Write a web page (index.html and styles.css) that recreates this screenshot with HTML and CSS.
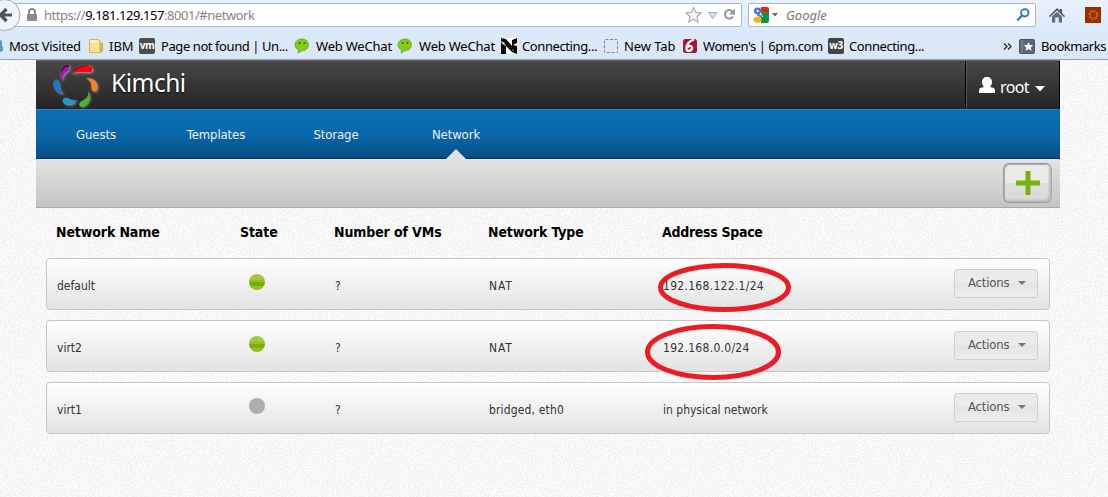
FILE: index.html
```html
<!DOCTYPE html>
<html lang="en">
<head>
<meta charset="utf-8">
<title>Kimchi</title>
<link rel="stylesheet" href="styles.css">
</head>
<body>
<svg class="grain" width="1108" height="437" aria-hidden="true">
  <filter id="noise" x="0" y="0" width="100%" height="100%" color-interpolation-filters="sRGB">
    <feTurbulence type="fractalNoise" baseFrequency="0.6" numOctaves="3" seed="4"/>
    <feColorMatrix values="0.13 0 0 0 0.906  0.13 0 0 0 0.906  0.13 0 0 0 0.906  0 0 0 0 1"/>
  </filter>
  <rect width="1108" height="437" filter="url(#noise)"/>
</svg>
<div class="browser">
  <div class="address-row">
    <div class="url-bar">
      <svg class="lock" width="12" height="14" viewBox="0 0 12 14"><path d="M3 6V4a3 3 0 0 1 6 0v2" fill="none" stroke="#8b8b8b" stroke-width="2"/><rect x="1" y="6" width="10" height="7" rx="1" fill="#8b8b8b"/></svg>
      <span class="url">https://<b>9.181.129.157</b>:8001/#network</span>
      <svg class="url-tools" width="54" height="18" viewBox="0 0 54 18">
        <path d="M8.500 1.500l2.200 4.800 5.300.6-3.900 3.600 1.100 5.500-4.700-2.700-4.700 2.700 1.100-5.500L1 6.900l5.300-.6z" fill="#f2f2f2" stroke="#a5a5a5" stroke-width="1.100"/>
        <path d="M23.500 6.500h8.500l-4.250 6z" fill="#d5e1ef" stroke="#a0aab8"/>
        <path d="M47.500 5.500a4.300 4.300 0 1 0 .5 5" fill="none" stroke="#8d98a5" stroke-width="2"/><path d="M50 2.500v6h-6z" fill="#8d98a5"/>
      </svg>
    </div>
    <div class="search-bar">
      <svg width="16" height="16" viewBox="0 0 16 16"><path d="M8 0h6a2 2 0 0 1 2 2v3H8z" fill="#e2231a"/><path d="M8 5h8v9a2 2 0 0 1-2 2H8z" fill="#159247"/><path d="M0 0h7v16H0z" fill="#fff"/><ellipse cx="4.600" cy="4" rx="3.600" ry="3.400" fill="#3b78dc"/><ellipse cx="4.600" cy="4" rx="1.100" ry="1.300" fill="#fff"/><path d="M5 7c3 .5 4 2 3 3.500L4 8.500z" fill="#3b78dc"/><ellipse cx="4.600" cy="12.800" rx="4.200" ry="3" fill="#f3b517"/><path d="M8 5.500c-1.500 1 1.500 2 1.500 4.500" fill="none" stroke="#fff" stroke-width="1"/></svg>
      <svg class="engine-caret" width="6" height="4" viewBox="0 0 6 4"><path d="M0 0h6L3 3.500z" fill="#666"/></svg>
      <span class="placeholder">Google</span>
      <svg class="magnifier" width="14" height="14" viewBox="0 0 14 14"><circle cx="8.800" cy="4.800" r="3.700" fill="none" stroke="#2e75b6" stroke-width="1.900"/><path d="M6 7.600L1.200 12.500" stroke="#2e75b6" stroke-width="2.200"/></svg>
    </div>
    <svg class="home" width="16" height="15" viewBox="0 0 16 15"><path d="M8 0l2.500 2.500V1H13v4l3 3-1 1.200L8 2.500 1 9.200 0 8z" fill="#55606e"/><path d="M3 8.500l5-4.700 5 4.700V14.500H9.800V9.500H6.200v5H3z" fill="#636e7b"/></svg>
    <svg class="addon" width="16" height="16" viewBox="0 0 16 16"><rect width="16" height="16" fill="#9b2d00"/><circle cx="8.500" cy="8" r="3.600" fill="none" stroke="#c8750a" stroke-width="1"/><circle cx="8.500" cy="8" r="4.600" fill="none" stroke="#c8750a" stroke-width="1.300" stroke-dasharray="1.400 2.200"/></svg>
  </div>
  <svg class="back" width="21" height="34" viewBox="0 0 21 34"><circle cx="4.500" cy="15" r="15.500" fill="#eff5fc" stroke="#9aaabd"/><path d="M12 15H2M6.500 9L.5 15l6 6" fill="none" stroke="#445365" stroke-width="3.200"/></svg>
  <div class="bookmarks">
    <svg class="cut-icon" width="3" height="14" viewBox="0 0 3 14"><path d="M0 1l2 1v5l1 1v4l-3 1z" fill="#4e9dcd"/></svg>
    <span class="bm visited">Most Visited</span>
    <svg width="16" height="16" viewBox="0 0 16 16"><path d="M11 5h3.500v8L12 14.500z" fill="#ddb445" stroke="#c99a31" stroke-width=".7"/><path d="M1.500 1.500h9L12 3v11.500H1.500z" fill="#f9e391" stroke="#d1a83b" stroke-width=".8"/><path d="M2.500 2.500h7v2h-7z" fill="#fff7cf"/></svg>
    <span class="bm ibm">IBM</span>
    <svg width="16" height="16" viewBox="0 0 16 16"><rect width="16" height="16" rx="2" fill="#4b4b50"/><text x="8" y="11" class="vm-mark">vm</text></svg>
    <span class="bm page">Page not found | Un...</span>
    <svg width="16" height="16" viewBox="0 0 16 16"><path d="M8 1c4 0 6.500 2.500 6.500 5.700S12 12.500 8.500 12.600L4 15l.7-3C2.500 11 1 9 1 6.700 1 3.500 4 1 8 1z" fill="#86cc16" stroke="#4c9221" stroke-width=".6"/><circle cx="5.500" cy="5" r="1" fill="#355f16"/><circle cx="10.500" cy="5" r="1" fill="#355f16"/></svg>
    <span class="bm wechat">Web WeChat</span>
    <svg width="16" height="16" viewBox="0 0 16 16"><path d="M8 1c4 0 6.500 2.500 6.500 5.700S12 12.500 8.500 12.600L4 15l.7-3C2.500 11 1 9 1 6.700 1 3.500 4 1 8 1z" fill="#86cc16" stroke="#4c9221" stroke-width=".6"/><circle cx="5.500" cy="5" r="1" fill="#355f16"/><circle cx="10.500" cy="5" r="1" fill="#355f16"/></svg>
    <span class="bm wechat second">Web WeChat</span>
    <svg width="16" height="16" viewBox="0 0 16 16"><rect width="16" height="16" fill="#fff"/><path d="M0 0l5 1 6 7V2l5-2v16l-5-2-6-6v8H0z" fill="#050505"/><path d="M0 3l4 2-2 2zM16 5l-4 2 4 1z" fill="#fff"/><circle cx="4" cy="7" r="1" fill="#d8a31d"/><circle cx="12" cy="12" r=".8" fill="#d8a31d"/></svg>
    <span class="bm connect">Connecting...</span>
    <svg width="16" height="16" viewBox="0 0 16 16"><rect x="1.500" y="1.500" width="13" height="13" rx="1" fill="none" stroke="#7a8693" stroke-dasharray="3 1.500"/></svg>
    <span class="bm newtab">New Tab</span>
    <svg width="16" height="16" viewBox="0 0 16 16"><rect x="1" y="1" width="14" height="14" rx="2.500" fill="#a8172d"/><path d="M12 1.500C7 3 4 7 4.500 11c.3 2.500 5 2.500 5.500-.7.300-2.600-2.500-3.200-4.500-1" fill="none" stroke="#fff" stroke-width="2.300"/></svg>
    <span class="bm women">Women's | 6pm.com</span>
    <svg width="16" height="16" viewBox="0 0 16 16"><rect width="16" height="16" rx="2" fill="#444"/><text x="8" y="11" class="w3-mark">w3</text></svg>
    <span class="bm last">Connecting...</span>
    <svg class="more" width="9" height="7" viewBox="0 0 9 7"><path d="M1 .5l3 3-3 3M5 .5l3 3-3 3" fill="none" stroke="#222" stroke-width="1.200"/></svg>
    <svg class="marks-icon" width="16" height="15" viewBox="0 0 16 15"><rect x=".5" y=".5" width="15" height="14" rx="1" fill="#596778" stroke="#465362"/><path d="M3 1v13" stroke="#8a97a6"/><path d="M9.500 3l1.400 3 3.300.3-2.500 2.200.8 3.300-3-1.800-3 1.800.8-3.300L4.800 6.300 8.100 6z" fill="#fff"/></svg>
    <span class="bm marks">Bookmarks</span>
  </div>
</div>
<main class="app">
  <header class="topbar">
    <svg class="logo" width="52" height="49" viewBox="0 0 52 49">
      <defs><filter id="glow" x="-30%" y="-30%" width="160%" height="160%"><feDropShadow dx="1" dy="1" stdDeviation="1.200" flood-color="#fff" flood-opacity=".4"/></filter></defs>
      <g filter="url(#glow)">
        <path d="M21 13C24 7 29 4 36 4c5 0 7 4 5 6.500-4 3-11-1.500-20 2.500z" fill="#fb0012"/><path d="M21 13C24 7 29 4 36 4l2 .6C31 5.500 26 7 21 13z" fill="#6d0915"/>
        <path d="M35 17.500c7-1 12 3 11.500 9-.5 5-5 5-6 1.500-.5-4 1-8-5.500-10.500z" fill="#f58220"/>
        <path d="M37.500 30c3 6 1 12-4 15-4 2-7-1-4-4 4-3 8-3 8-11z" fill="#46b928"/>
        <path d="M26 39c-3 5-8 6-12 4-4-2.500-2-7 2-6 4 1.500 5 3.500 10 2z" fill="#18a0cc"/>
        <path d="M13 33C7 33 3 29 2.500 23c0-5 3-5.500 4.500-3 2 4 0 9 6 13z" fill="#0878d8"/>
        <path d="M12 20C8 15 9 9 13 5.500c4-2 7 .5 4.500 4C14 12.500 11.500 13 12 20z" fill="#a713ad"/><path d="M9.500 14C9 8 12.500 3 18 4l1 2c-5-1-8 3-9.500 8z" fill="#51065e"/>
      </g>
    </svg>
    <h1 class="brand">Kimchi</h1>
    <div class="user">
      <svg width="16" height="16" viewBox="0 0 16 16"><path d="M8 0c3 0 5 2 5 5 0 2-1 4-2 5l4 1c1 1 1 3 1 5H0c0-2 0-4 1-5l4-1C4 9 3 7 3 5c0-3 2-5 5-5z" fill="#fff"/></svg>
      <span class="user-name">root</span>
      <svg width="10" height="6" viewBox="0 0 10 6"><path d="M0 0h10L5 5.500z" fill="#fff"/></svg>
    </div>
  </header>
  <nav class="nav">
    <a class="tab">Guests</a><a class="tab">Templates</a><a class="tab">Storage</a><a class="tab active">Network</a>
  </nav>
  <div class="toolbar">
    <button class="add"><svg width="26" height="26" viewBox="0 0 26 26"><path d="M10.500 1h5v9.500H25v5h-9.500V25h-5v-9.500H1v-5h9.500z" fill="#7caf0a"/></svg></button>
  </div>
  <section class="networks">
    <div class="grid head"><span>Network Name</span><span class="h-state">State</span><span>Number of VMs</span><span>Network Type</span><span class="h-space">Address Space</span></div>
    <div class="grid row"><span>default</span><i class="dot up"></i><span>?</span><span class="c-nat">NAT</span><span class="c-addr">192.168.122.1/24</span><button class="actions">Actions<i class="caret"></i></button></div>
    <div class="grid row"><span>virt2</span><i class="dot up"></i><span>?</span><span class="c-nat">NAT</span><span class="c-addr">192.168.0.0/24</span><button class="actions">Actions<i class="caret"></i></button></div>
    <div class="grid row"><span>virt1</span><i class="dot"></i><span>?</span><span class="c-bridge">bridged, eth0</span><span>in physical network</span><button class="actions">Actions<i class="caret"></i></button></div>
  </section>
</main>
<svg class="marks-layer" width="160" height="130" viewBox="640 255 160 130"><g fill="none" stroke="#ed1c24" stroke-width="5"><ellipse cx="724.500" cy="287.500" rx="64" ry="22"/><ellipse cx="713" cy="352" rx="65.500" ry="25.500"/></g></svg>
</body>
</html>
```

FILE: styles.css
```css
* { box-sizing: border-box; }
body { margin: 0; width: 1108px; height: 497px; overflow: hidden; position: relative; background: #f8f8f8; font: 12px/16px "DejaVu Sans Condensed", "DejaVu Sans", sans-serif; font-stretch: condensed; color: #333; }
svg { display: block; flex: none; }
h1 { margin: 0; font-weight: 400; }
.grain { position: absolute; left: 0; top: 60px; z-index: -1; }

.browser { height: 60px; position: relative; overflow: hidden; background: linear-gradient(#eaf3fd, #dbe9f8 55%, #d9e7f6); border-bottom: 1px solid #91a3ba; font-family: "Noto Sans", sans-serif; font-stretch: normal; }
.address-row { display: flex; height: 31px; padding-top: 3px; }
.url-bar, .search-bar { display: flex; align-items: center; height: 24px; background: #fff; border: 1px solid #a9b8ca; border-radius: 2px; }
.url-bar { width: 742px; padding: 0 2px 0 25px; }
.url { margin-left: 6px; font-size: 13px; letter-spacing: -.46px; color: #858585; }
.url b { font-weight: 400; color: #000; }
.url-tools { margin-left: auto; }
.search-bar { width: 288px; margin-left: 6px; padding: 0 5px 0 4px; }
.engine-caret { margin-left: 3px; }
.placeholder { margin-left: 8px; font: italic 13px/16px "Noto Sans", sans-serif; color: #777; }
.magnifier { margin-left: auto; }
.home { margin: 5px 0 0 13px; }
.addon { margin: 4px 0 0 20px; }
.back { position: absolute; left: 0; top: 0; }

.bookmarks { display: flex; align-items: center; height: 30px; }
.bm { font-size: 13px; line-height: 18px; color: #000; white-space: nowrap; margin-left: 6px; flex: none; }
.visited { width: 79px; letter-spacing: -.25px; }
.ibm { width: 30px; margin-left: 5px; }
.page { width: 133px; letter-spacing: -.42px; }
.wechat { width: 81px; letter-spacing: -.2px; }
.second { width: 82px; }
.connect { width: 81px; margin-left: 5px; letter-spacing: -.4px; }
.newtab { width: 58px; margin-left: 5px; letter-spacing: -.1px; }
.women { width: 125px; margin-left: 5px; letter-spacing: -.44px; }
.last { width: 154px; margin-left: 5px; letter-spacing: -.4px; }
.marks-icon { margin-left: 7px; }
.marks { margin-left: 6px; letter-spacing: -.45px; }
.vm-mark, .w3-mark { font: bold 10px "Open Sans", sans-serif; fill: #fff; text-anchor: middle; letter-spacing: -.5px; }

.app { width: 1024px; margin-left: 36px; }
.topbar { display: flex; height: 49px; background: linear-gradient(#484848, #242424); border-top: 1px solid #6a6662; }
.logo { margin-left: 15px; }
.brand { margin: 6px 0 0 8px; font: 24.500px/32px "Noto Sans", sans-serif; letter-spacing: -.5px; color: #fff; text-shadow: 0 1px 2px #000; }
.user { display: flex; align-items: center; width: 95px; margin-left: auto; padding: 0 0 0 13px; border-left: 1px solid #000; box-shadow: inset 1px 0 #555, inset -1px 0 #000; }
.user-name { width: 29px; margin: 3px 6px 0 5px; font: 16px/24px "Noto Sans", sans-serif; letter-spacing: -.6px; color: #fff; }
.user svg:first-child { margin-top: -1px; }
.user svg:last-child { margin-top: 8px; }
.nav { display: flex; height: 50px; background: linear-gradient(#0b6eb4, #0a67aa 50%, #054e84); border-top: 1px solid #2b85c3; border-bottom: 1px solid #04355a; }
.tab { position: relative; width: 120px; line-height: 49px; font-size: 13px; letter-spacing: -.1px; text-align: center; color: #eee; }
.tab.active::after { content: ""; position: absolute; left: 50%; bottom: -1px; margin-left: -10px; border: 10px solid transparent; border-top: 0; border-bottom-color: #e2e2e2; }
.toolbar { display: flex; height: 49px; justify-content: flex-end; padding: 4px 8px 0 0; background: linear-gradient(#e3e3e3, #c4c4c4); border-bottom: 1px solid #aaa; }
.add { display: flex; align-items: center; justify-content: center; width: 49px; height: 40px; padding: 0; border: 1px solid #999; border-right-color: #aaa; border-radius: 6px; background: linear-gradient(#eaeaea 50%, #dedede 50%, #d8d8d8); box-shadow: inset -2px -2px 2px #bbb, inset 1px 1px 1px #aaa; }

.networks { padding: 0 10px; }
.grid { display: grid; grid-template-columns: 183px 95px 154px 174px 291px 84px; padding-left: 10px; }
.head { height: 50px; padding-bottom: 2px; align-items: center; font-size: 14px; font-weight: 700; letter-spacing: -.12px; color: #000; white-space: nowrap; }
.h-state { padding-left: 1px; }
.h-space { letter-spacing: -.3px; }
.row { height: 52px; margin-bottom: 10px; align-items: center; border: 1px solid #c6c6c6; border-radius: 4px; background: linear-gradient(#fff, #e3e3e3); white-space: nowrap; }
.row > span { padding-top: 3px; }
.c-nat { letter-spacing: .9px; }
.c-addr { letter-spacing: .29px; }
.c-bridge { letter-spacing: .15px; }
.dot { width: 16px; height: 16px; margin: -4px 0 0 9px; border-radius: 50%; background: #aeaeae; }
.dot.up { background: linear-gradient(#a6c83d 37%, #96bd2a 37% 50%, #7cad0c 50% 75%, #8fc31f 75%); }
.actions { display: flex; align-items: center; height: 29px; width: 84px; margin-top: -2px; padding: 0 0 0 13px; border: 1px solid #d0d0d0; border-radius: 3px; background: linear-gradient(#ebebeb 48%, #e4e4e4 48%, #eee); font: inherit; font-size: 13px; letter-spacing: -.2px; color: #555; }
.caret { margin-left: 9px; border: 4px solid transparent; border-top-color: #777; border-bottom: 0; }
.marks-layer { position: absolute; left: 640px; top: 255px; }
```
